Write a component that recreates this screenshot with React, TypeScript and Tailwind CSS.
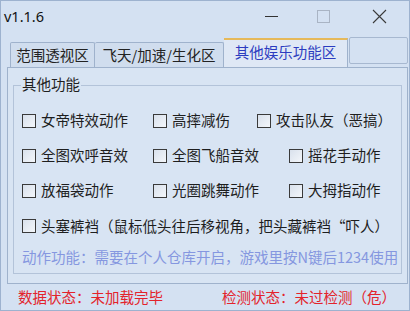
import React from 'react';

const cjk = "font-['Noto_Sans_CJK_SC','Noto_Sans',sans-serif]";

const Check: React.FC<{ label: string; w?: string }> = ({ label, w }) => (
  <div className={`flex items-center gap-[5px] ${w ?? ''}`}>
    <span className="w-[14px] h-[14px] shrink-0 border border-[#3a3a3a] bg-gradient-to-br from-[#d9e1ec] to-[#f3f6fa]" />
    <span className="text-[14.5px] leading-none text-[#1e1e1e] whitespace-nowrap">{label}</span>
  </div>
);

// Title bar buttons
const TitleButtons: React.FC = () => (
  <div className="flex items-center h-full">
    <div className="w-[52px] h-full flex items-center justify-center">
      <span className="block w-[13px] h-px bg-[#333]" />
    </div>
    <div className="w-[52px] h-full flex items-center justify-center">
      <span className="block w-[13px] h-[13px] border border-[#a9b4c4]" />
    </div>
    <div className="w-[60px] h-full flex items-center justify-center">
      <svg width="15" height="15" viewBox="0 0 15 15">
        <path d="M1 1L14 14M14 1L1 14" stroke="#3a3a3a" strokeWidth="1.1" />
      </svg>
    </div>
  </div>
);

export default function App() {
  return (
    <div className={`w-[410px] h-[311px] bg-[#d4e1f2] border border-[#9db2cf] flex flex-col overflow-hidden ${cjk}`}>
      {/* title bar */}
      <div className="h-[30px] flex items-center justify-between pl-[3px]">
        <span className="text-[14.5px] text-[#111] font-['Noto_Sans',sans-serif] leading-none">v1.1.6</span>
        <TitleButtons />
      </div>

      {/* tab strip */}
      <div className="h-[36px] flex items-end pl-[9px] pr-[1px]">
        <div className="h-[25px] w-[85px] flex items-center justify-center border border-b-0 border-[#9fb2cc] bg-[#d0ddee] text-[14.5px] text-[#222] rounded-t-[2px]">
          范围透视区
        </div>
        <div className="h-[25px] w-[129px] flex items-center justify-center border border-l-0 border-b-0 border-[#9fb2cc] bg-[#d0ddee] text-[14.5px] text-[#222] rounded-t-[2px]">
          飞天/加速/生化区
        </div>
        <div className="h-[29px] w-[124px] flex items-center justify-center border border-l-0 border-b-0 border-[#9fb2cc] border-t-2 border-t-[#e6b95a] bg-[#dfe8f5] text-[14.5px] text-[#2c3cc0] pb-[3px]">
          其他娱乐功能区
        </div>
        <div className="flex-1 h-[27px] mb-[3px] ml-[1px] border border-[#a7b8d0] rounded-[2px]" />
      </div>

      {/* tab panel */}
      <div className="ml-[6px] mr-[1px] h-[217px] border border-[#9fb2cc] bg-[#d8e4f3] px-[5px] pt-[17px]">
        <div className="relative h-[189px] border border-[#b3c3d9] pl-[8px] pt-[17px]">
          <span className="absolute left-[7px] -top-[9px] px-[1px] bg-[#d8e4f3] text-[14.5px] leading-none text-[#1e1e1e]">
            其他功能
          </span>
          <div className="h-[35px] flex items-center">
            <Check label="女帝特效动作" w="w-[131px]" />
            <Check label="高摔减伤" w="w-[104px]" />
            <Check label="攻击队友（恶搞）" />
          </div>
          <div className="h-[35px] flex items-center">
            <Check label="全图欢呼音效" w="w-[131px]" />
            <Check label="全图飞船音效" w="w-[136px]" />
            <Check label="摇花手动作" />
          </div>
          <div className="h-[35px] flex items-center">
            <Check label="放福袋动作" w="w-[131px]" />
            <Check label="光圈跳舞动作" w="w-[136px]" />
            <Check label="大拇指动作" />
          </div>
          <div className="h-[36px] flex items-center">
            <Check label="头塞裤裆（鼠标低头往后移视角，把头藏裤裆“吓人）" />
          </div>
          <div className="h-[26px] flex items-center">
            <span className="text-[14.5px] leading-none text-[#8597e0] whitespace-nowrap">
              动作功能：需要在个人仓库开启，游戏里按N键后1234使用
            </span>
          </div>
        </div>
      </div>

      {/* status bar */}
      <div className="flex-1 flex items-center pl-[17px] text-[14.5px] leading-none text-[#e3232b]">
        <span className="w-[204px]">数据状态：未加载完毕</span>
        <span>检测状态：未过检测（危）</span>
      </div>
    </div>
  );
}
